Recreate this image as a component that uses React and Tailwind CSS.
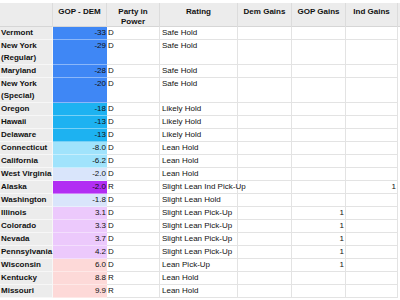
const rows = [
  { state: "Vermont", val: "-33", party: "D", rating: "Safe Hold", bg: "bg-[#3f87f5]" },
  { state: "New York (Regular)", val: "-29", party: "D", rating: "Safe Hold", bg: "bg-[#3f87f5]", tall: true },
  { state: "Maryland", val: "-28", party: "D", rating: "Safe Hold", bg: "bg-[#3f87f5]" },
  { state: "New York (Special)", val: "-20", party: "D", rating: "Safe Hold", bg: "bg-[#3f87f5]", tall: true },
  { state: "Oregon", val: "-18", party: "D", rating: "Likely Hold", bg: "bg-[#1db2f1]" },
  { state: "Hawaii", val: "-13", party: "D", rating: "Likely Hold", bg: "bg-[#1db2f1]" },
  { state: "Delaware", val: "-13", party: "D", rating: "Likely Hold", bg: "bg-[#1db2f1]" },
  { state: "Connecticut", val: "-8.0", party: "D", rating: "Lean Hold", bg: "bg-[#a0e3fc]" },
  { state: "California", val: "-6.2", party: "D", rating: "Lean Hold", bg: "bg-[#a0e3fc]" },
  { state: "West Virginia", val: "-2.0", party: "D", rating: "Lean Hold", bg: "bg-[#d9e5fb]" },
  { state: "Alaska", val: "-2.0", party: "R", rating: "Slight Lean Ind Pick-Up", bg: "bg-[#b22ef3]", ind: "1" },
  { state: "Washington", val: "-1.8", party: "D", rating: "Slight Lean Hold", bg: "bg-[#d9e5fb]" },
  { state: "Illinois", val: "3.1", party: "D", rating: "Slight Lean Pick-Up", bg: "bg-[#ecc9fc]", gop: "1" },
  { state: "Colorado", val: "3.3", party: "D", rating: "Slight Lean Pick-Up", bg: "bg-[#ecc9fc]", gop: "1" },
  { state: "Nevada", val: "3.7", party: "D", rating: "Slight Lean Pick-Up", bg: "bg-[#ecc9fc]", gop: "1" },
  { state: "Pennsylvania", val: "4.2", party: "D", rating: "Slight Lean Pick-Up", bg: "bg-[#ecc9fc]", gop: "1" },
  { state: "Wisconsin", val: "6.0", party: "D", rating: "Lean Pick-Up", bg: "bg-[#fdd9d8]", gop: "1" },
  { state: "Kentucky", val: "8.8", party: "R", rating: "Lean Hold", bg: "bg-[#fdd9d8]" },
  { state: "Missouri", val: "9.9", party: "R", rating: "Lean Hold", bg: "bg-[#fdd9d8]" },
];

const cols = "grid grid-cols-[53px_54px_53px_78px_54px_54px_52px]";

export default function App() {
  return (
    <div className="w-[400px] h-[300px] bg-white pt-[3px] text-[8px] text-[#111] font-['Liberation_Sans',Arial,sans-serif] overflow-hidden">
      {/* header */}
      <div className={`${cols} h-[24px] bg-[#ececec] border-b border-[#d6d6d6] font-bold leading-[10px]`}>
        <div className="border-r border-[#dcdcdc]" />
        <div className="border-r border-[#dcdcdc] text-center pt-[4px]">GOP - DEM</div>
        <div className="border-r border-[#dcdcdc] text-center pt-[4px]">Party in<br />Power</div>
        <div className="border-r border-[#dcdcdc] text-center pt-[4px]">Rating</div>
        <div className="border-r border-[#dcdcdc] text-center pt-[4px]">Dem Gains</div>
        <div className="border-r border-[#dcdcdc] text-center pt-[4px]">GOP Gains</div>
        <div className="border-r border-[#dcdcdc] text-center pt-[4px]">Ind Gains</div>
      </div>
      {rows.map((r) => (
        <Row key={r.state} r={r} />
      ))}
    </div>
  );
}

function Row({ r }) {
  const h = r.tall ? "h-[25px]" : "h-[13px]";
  const wrap = r.tall ? "" : "whitespace-nowrap";
  return (
    <div className={`${cols} ${h} leading-[12px]`}>
      <div className={`bg-[#ececec] border-b border-r border-[#f7f7f7] pl-[1px] font-bold ${wrap}`}>{r.state}</div>
      <div className={`${r.bg} border-b border-white/40 text-right pr-[1px]`}>{r.val}</div>
      <div className="border-b border-r border-[#e3e3e3] pl-[1px]">{r.party}</div>
      <div className="border-b border-r border-[#e3e3e3] pl-[2px] whitespace-nowrap relative z-10">{r.rating}</div>
      <div className="border-b border-r border-[#e3e3e3]" />
      <div className="border-b border-r border-[#e3e3e3] text-right pr-[1px]">{r.gop}</div>
      <div className="border-b border-r border-[#e3e3e3] text-right pr-[1px]">{r.ind}</div>
    </div>
  );
}
